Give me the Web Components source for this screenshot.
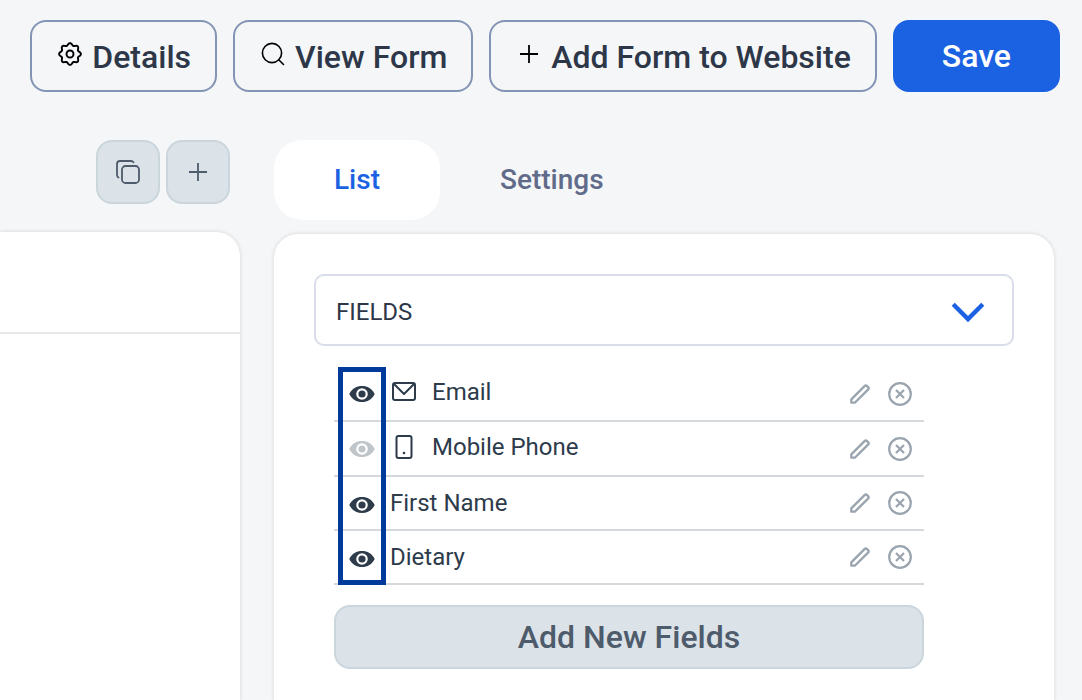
<!DOCTYPE html>
<html lang="en">
<head>
<meta charset="utf-8">
<meta name="viewport" content="width=device-width, initial-scale=1">
<title>Form builder</title>
<style>
  body { margin: 0; background: #f4f6f8; color: #2d3748; font-family: Roboto, "Liberation Sans", sans-serif; }
</style>
</head>
<body>
<form-builder></form-builder>
<script>
// Outline of a cog with eight soft teeth, as a closed polar curve.
const cog = Array.from({ length: 128 }, (_, i) => {
  const a = i / 128 * 2 * Math.PI;
  const r = 9.8 + 1.1 * Math.cos(8 * a);
  return (14 + r * Math.cos(a)).toFixed(2) + ' ' + (14 + r * Math.sin(a)).toFixed(2);
}).join('L');

const ICONS = {
  gear: `<g fill="none" stroke="currentColor" stroke-width="1.9" stroke-linejoin="round"><circle cx="14" cy="14" r="3.5"/><path d="M${cog}z"/></g>`,
  search: `<g fill="none" stroke="currentColor" stroke-width="1.6" stroke-linecap="round"><circle cx="13" cy="13" r="9.6"/><path d="M20 20l4.500 4.500"/></g>`,
  plus: `<path d="M14 5v18M5 14h18" stroke="currentColor" stroke-width="1.8"/>`,
  copy: `<g fill="none" stroke="currentColor" stroke-width="1.8" stroke-linecap="round"><rect x="8" y="8" width="17" height="17" rx="3.5"/><path d="M4.500 19.500A3 3 0 0 1 3 17V6A3 3 0 0 1 6 3h11A3 3 0 0 1 19.500 4.300"/></g>`,
  eye: `<path fill="currentColor" fill-rule="evenodd" d="M1.300 14C4 8.500 8.500 6 14 6s10 2.500 12.700 8c-2.700 5.500-7.200 8-12.700 8S4 19.500 1.300 14zM14 8.200a5.800 5.800 0 1 0 0 11.600 5.800 5.800 0 0 0 0-11.600zm0 2.200a3.600 3.600 0 1 1 0 7.200 3.600 3.600 0 0 1 0-7.200z"/>`,
  mail: `<g fill="none" stroke="currentColor" stroke-width="2" stroke-linejoin="round"><rect x="3" y="5" width="22" height="17" rx="2"/><path d="M3.500 5.500L14 16 24.500 5.500"/></g>`,
  phone: `<rect x="6.500" y="3" width="15" height="22" rx="2" fill="none" stroke="currentColor" stroke-width="2"/><circle cx="14" cy="20" r="1.3" fill="currentColor"/>`,
  pencil: `<path d="M5.300 22.700v-3.300L18.800 5.900a1.400 1.400 0 0 1 2 0l1.500 1.500a1.400 1.400 0 0 1 0 2L8.800 22.700z" fill="none" stroke="currentColor" stroke-width="2.3" stroke-linejoin="round"/>`,
  remove: `<g fill="none" stroke="currentColor" stroke-width="2.2"><circle cx="14" cy="14" r="10.800"/><path d="M10 10l8 8M18 10l-8 8"/></g>`,
  chevron: `<path d="M2.500 8L14 19.500 25.500 8" fill="none" stroke="currentColor" stroke-width="3.4"/>`
};

function define(name, render) {
  customElements.define(name, class extends HTMLElement {
    connectedCallback() {
      if (!this.shadowRoot) this.attachShadow({ mode: 'open' }).innerHTML = render(this);
    }
  });
}

define('ui-icon', el => `
  <style>
    :host { display: block; flex: none; width: var(--icon-size, 28px); height: var(--icon-size, 28px); }
    svg { display: block; width: 100%; height: 100%; }
  </style>
  <svg viewBox="0 0 28 28" aria-hidden="true">${ICONS[el.getAttribute('name')]}</svg>`);

define('action-button', () => `
  <style>
    :host { display: block; }
    button { display: flex; align-items: center; justify-content: center; gap: 8px; width: 100%; height: 72px;
      box-sizing: border-box; padding: 2px 24px 0; border: 2px solid #8494b4; border-radius: 16px; background: transparent;
      color: #2d3748; font: 500 32px/40px Roboto, sans-serif; white-space: nowrap; cursor: pointer; }
    ::slotted(ui-icon) { color: #000; margin-bottom: 6px; }
    :host([variant=primary]) button { padding: 0 47px; border-color: #1b62e3; background: #1b62e3; color: #fff; }
    :host([variant=soft]) button { height: 64px; padding: 0 24px; border-color: #cad5dc; background: #dbe2e8; color: #4d5b6b; }
  </style>
  <button type="button"><slot name="icon"></slot><slot></slot></button>`);

define('square-button', el => `
  <style>
    :host { display: block; }
    button { display: grid; place-items: center; width: 64px; height: 64px; padding: 0; border: 2px solid #cad5dc;
      border-radius: 16px; background: #dbe2e8; color: #4d5b6b; cursor: pointer; }
  </style>
  <button type="button" aria-label="${el.getAttribute('label')}"><slot></slot></button>`);

define('tab-button', el => `
  <style>
    :host { display: block; }
    button { height: 80px; padding: 0 60px; border: 0; border-radius: 28px; background: transparent; color: #606b8a;
      font: 500 28px/32px Roboto, sans-serif; cursor: pointer; }
    button[aria-selected=true] { background: #fff; color: #1b62e3; }
  </style>
  <button type="button" role="tab" aria-selected="${el.hasAttribute('selected')}"><slot></slot></button>`);

define('surface-panel', () => `
  <style>
    :host { display: block; background: #fff; border-radius: 24px 24px 0 0; box-shadow: 0 0 4px rgba(0,0,0,.14); }
  </style>
  <slot></slot>`);

define('section-toggle', () => `
  <style>
    :host { display: block; }
    button { display: flex; align-items: center; justify-content: space-between; width: 100%; height: 72px;
      box-sizing: border-box; padding: 4px 26px 0 20px; border: 2px solid #d9ddea; border-radius: 10px; background: #fff;
      color: #2d3748; font: 400 24px/28px Roboto, sans-serif; cursor: pointer; }
    ui-icon { --icon-size: 36px; color: #1b62e3; }
  </style>
  <button type="button" aria-expanded="true"><slot></slot><ui-icon name="chevron"></ui-icon></button>`);

define('field-row', el => `
  <style>
    :host { display: flex; align-items: center; box-sizing: border-box; height: 54px; padding-right: 12px;
      border-bottom: 2px solid #d5d9dd; color: #2d3b4b; font-size: 24px; line-height: 28px; }
    :host([icon]) { height: 55px; }
    button { display: grid; place-items: center; padding: 0; border: 0; background: none; color: #9aa4af; cursor: pointer; }
    .eye { width: 56px; padding-top: 3px; color: #2d3b4b; }
    :host([icon]) .eye { padding-top: 1px; }
    .eye[aria-pressed=false] { color: #c0c5ca; }
    .kind { margin: 0 14px 3px 0; }
    .name { flex: 1; }
    .kind + .name { margin-bottom: 3px; }
    .tools { display: flex; gap: 12px; margin-right: -2px; }
  </style>
  <button class="eye" type="button" aria-label="Visible" aria-pressed="${!el.hasAttribute('concealed')}"><ui-icon name="eye"></ui-icon></button>
  ${el.hasAttribute('icon') ? `<ui-icon class="kind" name="${el.getAttribute('icon')}"></ui-icon>` : ''}
  <span class="name"><slot></slot></span>
  <span class="tools">
    <button type="button" aria-label="Edit"><ui-icon name="pencil"></ui-icon></button>
    <button type="button" aria-label="Remove"><ui-icon name="remove"></ui-icon></button>
  </span>`);

define('field-list', () => `
  <style>
    :host { display: block; position: relative; }
    .marker { position: absolute; inset: 0 auto 0 4px; width: 48px; box-sizing: border-box; border: 5px solid #003a9b; pointer-events: none; }
  </style>
  <slot></slot><div class="marker"></div>`);

define('form-builder', () => `
  <style>
    :host { display: flex; flex-direction: column; min-height: 100vh; box-sizing: border-box; padding-top: 20px; }
    header { display: flex; justify-content: flex-end; gap: 16px; padding: 0 22px 48px; }
    main { flex: 1; display: grid; grid-template-columns: 4fr 13fr; gap: 34px; padding-right: 28px; }
    section { display: flex; flex-direction: column; min-width: 0; }
    .copying { display: flex; justify-content: flex-end; gap: 6px; padding: 0 10px 28px; }
    .preview { flex: 1; border-top-left-radius: 0; }
    .preview-head { height: 100px; border-bottom: 2px solid #e6e7e9; }
    .tabs { display: flex; padding-bottom: 14px; }
    .settings { flex: 1; padding: 40px 40px 31px; }
    .fields { padding: 21px 90px 0 20px; }
    .add { margin-top: 20px; }
  </style>
  <header>
    <action-button><ui-icon slot="icon" name="gear"></ui-icon>Details</action-button>
    <action-button><ui-icon slot="icon" name="search"></ui-icon>View Form</action-button>
    <action-button><ui-icon slot="icon" name="plus"></ui-icon>Add Form to Website</action-button>
    <action-button variant="primary">Save</action-button>
  </header>
  <main>
    <section>
      <div class="copying">
        <square-button label="Duplicate"><ui-icon name="copy"></ui-icon></square-button>
        <square-button label="Add"><ui-icon name="plus"></ui-icon></square-button>
      </div>
      <surface-panel class="preview"><div class="preview-head"></div></surface-panel>
    </section>
    <section>
      <div class="tabs" role="tablist">
        <tab-button selected>List</tab-button>
        <tab-button>Settings</tab-button>
      </div>
      <surface-panel class="settings">
        <section-toggle>FIELDS</section-toggle>
        <div class="fields">
          <field-list>
            <field-row icon="mail">Email</field-row>
            <field-row icon="phone" concealed>Mobile Phone</field-row>
            <field-row>First Name</field-row>
            <field-row>Dietary</field-row>
          </field-list>
          <action-button class="add" variant="soft">Add New Fields</action-button>
        </div>
      </surface-panel>
    </section>
  </main>`);
</script>
</body>
</html>
